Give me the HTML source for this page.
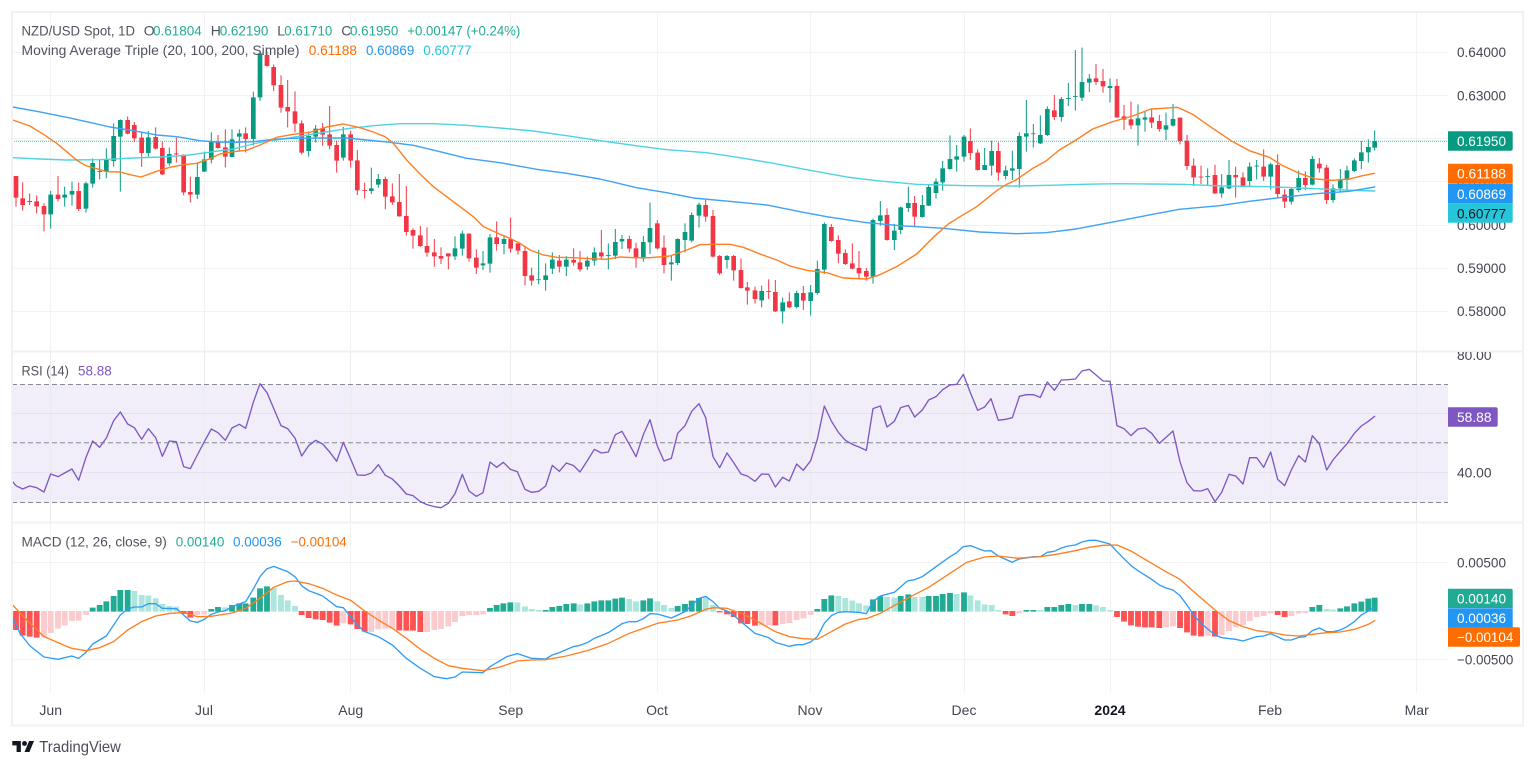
<!DOCTYPE html>
<html><head><meta charset="utf-8"><title>NZD/USD</title>
<style>
html,body{margin:0;padding:0;background:#fff;width:1536px;height:767px;overflow:hidden}
svg{display:block;filter:blur(.3px)}
text{font-family:"Liberation Sans",sans-serif;font-size:14px;fill:#434651}
.w{fill:#fff}
.u{fill:#22AB94}
.l{fill:#50535e}
</style></head><body>
<svg width="1536" height="767" viewBox="0 0 1536 767" xmlns="http://www.w3.org/2000/svg">
<defs><clipPath id="c80"><rect x="1448" y="352" width="70" height="30"/></clipPath></defs>
<rect width="1536" height="767" fill="#fff"/>
<!-- RSI band -->
<rect x="12" y="384.3" width="1436" height="118" fill="#F2EEF9"/>
<!-- grid -->
<g stroke="#F3F3F6" stroke-width="1" fill="none">
<path d="M12 52.5H1448M12 95.5H1448M12 138.5H1448M12 181.5H1448M12 225.5H1448M12 268.5H1448M12 311.5H1448"/>
<path d="M12 562.5H1448M12 659.5H1448"/>
<path d="M50.5 13V693M204.5 13V693M350.5 13V693M510.5 13V693M657.5 13V693M810.5 13V693M964.5 13V693M1110.5 13V693M1270.5 13V693M1416.5 13V693"/>
</g>
<path d="M12 413.5H1448M12 472.5H1448" stroke="#E6E2F0" fill="none"/>
<path d="M50.5 352V522M204.5 352V522M350.5 352V522M510.5 352V522M657.5 352V522M810.5 352V522M964.5 352V522M1110.5 352V522M1270.5 352V522M1416.5 352V522" stroke="#000" stroke-opacity=".03" fill="none"/>
<path d="M12 384.5H1448M12 442.8H1448M12 502.5H1448" stroke="#787B86" stroke-opacity=".9" stroke-dasharray="5 3" fill="none"/>
<!-- candles group 1 -->
<g transform="scale(.33333)" fill="none">
<path stroke="#F23645" stroke-width="3" d="M48 528V620M68 547V632M89 580V615M110 586V640M132 610V694M174 528V604M236 548V633M383 349V403M403 366V426M425 398V501M467 382V448M487 425V525M529 413V488M551 464V586M571 530V607M654 405V446M676 388V502M737 382V457M801 155V200M821 193V273M843 226V338M863 240V382M885 274V397M905 361V463M968 369V437M989 318V448M1010 422V518M1052 392V503M1072 450V585M1094 548V596M1156 530V627M1177 550V615M1198 522V650M1219 558V707M1239 685V746M1261 678V741M1281 682V770M1303 717V800M1323 742V792M1345 760V808M1407 700V785M1429 748V822M1490 664V752M1532 653V758M1554 730V764"/>
<path stroke="#F23645" stroke-width="14" d="M48 528V593M68 595V615M89 603V606M110 604V619M132 618V643M174 584V597M236 573V627M383 360V401M403 375V415M425 413V459M467 411V446M487 444V523M529 460V463M551 464V577M571 576V584M654 424V444M676 442V470M737 400V417M801 165V198M821 201V256M843 255V323M863 321V334M885 334V371M905 370V458M968 385V404M989 403V437M1010 435V482M1052 403V482M1072 481V571M1094 570V572.5M1156 537V590M1177 589V607M1198 606V649M1219 648V696M1239 690V707M1261 706V738M1281 738V758M1303 757V769M1323 768V776M1345 760V769M1407 701V775M1429 773V803M1490 712V732M1532 717V746M1554 730V752"/>
<path stroke="#089981" stroke-width="3" d="M152 573V686M194 560V620M216 545V617M258 545V638M278 475V563M299 478V538M319 445V535M341 370V500M361 358V575M445 393V470M508 443V497M592 490V597M613 455V516M634 397V490M696 388V472M718 388V455M760 275V437M780 155V303M926 395V470M947 375V428M1030 381V482M1114 503V582M1135 522V563M1365 709V780M1387 692V767M1449 753V810M1470 702V818M1512 705V763"/>
<path stroke="#089981" stroke-width="14" d="M152 584V643M194 584V593M216 573V584M258 550V626M278 489V551M299 513V515.5M319 479V515M341 408V483M361 360V410M445 412V459M508 462V490M592 531V584M613 478V515M634 424V479M696 418V471M718 400V410M760 292V417M780 160V292M926 408V453M947 386V410M1030 403V473M1114 565V573M1135 537V554M1365 745V769M1387 701V746M1449 790V796M1470 712V791M1512 717V732"/>
</g>
<!-- candles group 2 -->
<g transform="translate(500 0) scale(.33333)" fill="none">
<path stroke="#F23645" stroke-width="3" d="M75 740V856M95 803V857M178 765V817M221 745V797M240 753V815M304 690V778M388 707V757M408 728V803M472 660V748M492 706V820M617 600V665M639 630V772M659 765V825M701 765V842M723 775V866M742 846V914M765 860V911M806 838V897M826 840V936M868 877V925M910 858V930M994 672V725M1015 706V790M1036 748V795M1057 730V808M1077 753V835M1099 804V842M1161 625V722M1244 588V678M1411 385V480M1433 448V512M1495 427V542"/>
<path stroke="#F23645" stroke-width="14" d="M75 753V828M95 826V842M178 782V800M221 780V788M240 787V808M304 757V769M388 717V746M408 745V775M472 670V745M492 743V795M617 615V650M639 648V770M659 768V820M701 768V811M723 810V864M742 862V872M765 871V897M806 873V875.5M826 876V934M868 904V922M910 879V902M994 681V723M1015 720V761M1036 759V792M1057 790V806M1077 804V820M1099 813V830M1161 645V720M1244 609V650M1411 423V459M1433 458V510M1495 453V518"/>
<path stroke="#089981" stroke-width="3" d="M116 750V853M137 790V872M157 757V822M199 768V828M262 770V810M283 742V797M325 730V808M346 687V777M366 705V747M430 708V785M450 608V762M514 768V842M533 715V795M555 670V757M575 637V727M597 608V683M681 765V806M785 857V922M848 893V970M890 872V925M932 855V947M952 782V884M973 667V822M1119 656V851M1141 603V677M1183 672V750M1202 620V702M1225 560V636M1267 585V653M1286 552V618M1308 535V596M1328 483V572M1350 406V509M1370 435V515M1392 405V485M1454 444V510M1475 422V527M1517 497V538M1537 452V540"/>
<path stroke="#089981" stroke-width="14" d="M116 838V840.5M137 826V840M157 779V806M199 779V800M262 782V800M283 757V782M325 765V767.5M346 726V767M366 717V724M430 726V776M450 684V727M514 787V793M533 717V789M555 696V720M575 645V722M597 614V647M681 768V780M785 873V901M848 907V934M890 879V921M932 877V903M952 807V879M973 672V809M1119 660V830M1141 646V663M1183 692V720M1202 622V690M1225 609V624M1267 615V651M1286 561V617M1308 545V579M1328 505V547M1350 477V507M1370 469V479M1392 410V470M1454 495V510M1475 453V497M1517 511V528M1537 505V512"/>
</g>
<!-- candles group 3 -->
<g transform="translate(1016 0) scale(.33333)" fill="none">
<path stroke="#089981" stroke-width="3" d="M10 397V563M31 300V455M52 372V443M73 346V432M94 319V408M136 291V365M157 249V318M178 150V332M198 143V303M220 222V276M282 235V307M366 313V437M387 335V395M450 338V420M471 312V380M575 505V555M617 522V593M639 480V568M701 487V558M722 480V538M764 488V568M826 565V613M848 512V577M889 468V556M951 553V608M973 507V575M993 497V573M1015 475V516M1036 423V507M1057 418V488M1076 391V452"/>
<path stroke="#089981" stroke-width="14" d="M10 408V507M31 400V410M52 400V402.5M73 405V430M94 327V405M136 297V351M157 294V296.5M178 288V290.5M198 246V293M220 236V248M282 258V264M366 355V376M387 352V359M450 376V389M471 357V377M575 528V530.5M617 562V580M639 525V565M701 500V543M722 497V499.5M764 493V530M826 567V605M848 534V570M889 477V554M951 565V600M973 538V565M993 511V540M1015 481V513M1036 457V483M1057 441V457M1076 423V443"/>
<path stroke="#F23645" stroke-width="3" d="M115 285V360M240 192V255M261 207V278M303 237V354M324 315V390M345 305V387M407 327V384M430 345V395M492 352V433M513 405V510M533 475V558M555 497V552M597 494V582M659 500V593M681 517V560M743 448V543M785 463V596M806 567V624M868 514V570M910 474V518M932 495V612"/>
<path stroke="#F23645" stroke-width="14" d="M115 331V351M240 235V246M261 243V259M303 258V352M324 349V359M345 358V376M407 352V368M430 363V387M492 353V423M513 422V498M533 497V532M555 530V532.5M597 525V580M659 525V532M681 532V558M743 500V530M785 495V582M806 584V605M868 534V555M910 491V505M932 503V600"/>
</g>
<!-- price line -->
<path d="M12 141.2H1448" stroke="#10A78E" stroke-opacity=".8" stroke-dasharray="1 1" fill="none"/>
<!-- MAs -->
<g fill="none" stroke-width="4.2" stroke-linejoin="round" stroke-linecap="round">
<g stroke="#4FD3E3">
<polyline transform="scale(.33333)" points="38,473 120,477 200,480 300,479 400,474 480,471 560,466 640,455 700,447 780,427 860,415 960,399 1040,386 1120,377 1200,371 1300,371 1400,376 1500,384"/>
<polyline transform="translate(500 0) scale(.33333)" points="0,384 100,393 200,407 300,422 400,436 500,449 620,458 720,473 820,490 930,511 1040,531 1130,542 1250,553 1400,557 1548,558"/>
<polyline transform="translate(1016 0) scale(.33333)" points="0,558 100,556 200,553 300,551 400,552 500,553 620,558 760,560 900,566 980,570 1076,573"/>
</g>
<g stroke="#3FA2F5">
<polyline transform="scale(.33333)" points="38,321 120,336 200,352 260,365 330,381 400,392 470,405 530,410 600,422 650,426 700,427 760,425 820,418 880,415 960,414 1040,414 1100,420 1170,427 1240,436 1320,455 1400,475 1500,488"/>
<polyline transform="translate(500 0) scale(.33333)" points="0,488 110,508 200,520 300,537 410,563 500,578 580,594 700,605 800,615 900,635 980,650 1100,668 1200,677 1330,685 1440,696 1548,701"/>
<polyline transform="translate(1016 0) scale(.33333)" points="0,701 90,698 180,687 280,668 400,645 490,628 610,617 700,604 800,592 900,581 1000,574 1076,561"/>
</g>
<g stroke="#FF7F20">
<polyline transform="scale(.33333)" points="38,360 90,378 130,403 170,430 200,455 232,482 258,497 290,506 320,515 360,516 390,524 423,531 470,514 510,502 550,494 590,490 630,476 660,462 700,455 740,451 780,435 830,412 880,403 930,397 980,381 1030,372 1080,383 1120,396 1155,410 1180,430 1220,480 1260,522 1300,560 1340,590 1380,620 1420,650 1450,680 1490,698 1500,703"/>
<polyline transform="translate(500 0) scale(.33333)" points="0,703 30,715 60,730 90,750 130,765 170,772 220,773 270,776 320,778 360,771 400,773 450,773 510,768 560,750 600,734 640,733 690,733 730,742 780,762 830,780 870,798 920,811 980,818 1030,834 1100,837 1140,824 1190,800 1250,762 1300,712 1345,672 1380,650 1430,620 1490,572 1520,553 1548,540"/>
<polyline transform="translate(1016 0) scale(.33333)" points="0,540 50,505 90,483 130,450 180,420 230,387 290,365 350,348 405,327 440,325 485,322 530,343 590,385 650,425 700,452 760,472 800,497 850,520 900,537 950,541 1000,537 1040,527 1076,520"/>
</g>
</g>
<!-- RSI line -->
<g fill="none" stroke="#7E57C2" stroke-width="4" stroke-linejoin="round" stroke-linecap="round">
<polyline transform="translate(0 350) scale(.33333)" points="38,395 48,407 68,417 89,408 110,413 132,426 152,372 174,380 194,369 216,357 236,391 258,322 278,273 299,292 319,264 341,212 361,186 383,222 403,233 425,268 445,236 467,263 487,319 508,273 529,275 551,350 571,356 592,315 613,275 634,237 654,248 676,271 696,234 718,223 737,235 760,157 780,101 801,128 821,175 843,227 863,236 885,264 905,318 926,287 947,271 968,282 989,306 1010,334 1030,277 1052,327 1072,375 1094,376 1114,369 1135,344 1156,376 1177,387 1198,408 1219,432 1239,437 1261,455 1281,464 1303,470 1323,473 1345,460 1365,431 1387,373 1407,423 1429,439 1449,428 1470,336 1490,352"/>
<polyline transform="translate(500 350) scale(.33333)" points="-10,352 10,337 31,358 52,365 75,418 95,427 116,424 137,408 157,346 178,364 199,339 221,347 240,366 262,332 283,298 304,309 325,306 346,254 366,244 388,283 408,320 430,254 450,209 472,288 492,333 514,325 533,250 555,227 575,184 597,161 617,203 639,320 659,353 681,309 701,338 723,372 742,378 765,394 785,372 806,373 826,411 848,382 868,393 890,342 910,361 932,332 952,268 973,168 994,213 1015,247 1036,271 1057,283 1077,291 1099,301 1119,176 1141,168 1161,231 1183,214 1202,173 1225,166 1244,201 1267,180 1286,150 1308,140 1328,119 1350,105 1370,103 1390,73 1411,128 1433,181 1454,171 1473,146 1495,211 1517,208 1537,203 1558,140"/>
<polyline transform="translate(1016 350) scale(.33333)" points="10,139 31,134 52,134 73,142 94,96 115,121 136,90 157,89 178,87 198,63 220,58 240,75 261,93 282,94 303,227 324,236 345,257 366,237 387,234 407,250 430,280 450,262 471,243 492,335 513,398 533,422 555,423 575,416 597,455 617,427 639,373 659,378 681,402 701,323 722,323 743,352 764,306 785,388 806,407 826,360 848,317 868,336 889,257 910,281 932,360 951,330 973,304 993,281 1015,250 1036,228 1057,214 1076,199"/>
</g>
<!-- MACD histogram -->
<g transform="translate(0 350) scale(.33333)" fill="none" stroke-width="17.5">
<path stroke="#FF5252" d="M48 783V840M68 783V857M89 783V860M110 783V863M551 783V792M571 783V803M905 783V795M926 783V804M947 783V808M968 783V810M989 783V818M1010 783V827M1052 783V823M1072 783V837M1094 783V845M1198 783V841M1219 783V842M1239 783V842M1261 783V846"/>
<path stroke="#FCCBCD" d="M132 783V862M152 783V849M174 783V836M194 783V826M216 783V813M236 783V812M258 783V795M592 783V795M613 783V793M1030 783V820M1114 783V846M1135 783V838M1156 783V836M1177 783V836M1281 783V846M1303 783V840M1323 783V837M1345 783V829M1365 783V816M1387 783V798M1407 783V795M1429 783V795M1449 783V793"/>
<path stroke="#22AB94" d="M278 785V773M299 785V765M319 785V754M341 785V738M361 785V720M383 785V720M634 785V777M654 785V771M696 785V765M718 785V760M737 785V760M760 785V743M780 785V715M801 785V709M1470 785V774M1490 785V765"/>
<path stroke="#ACE5DC" d="M403 785V723M425 785V735M445 785V737M467 785V745M487 785V762M508 785V768M529 785V770M676 785V772M821 785V714M843 785V735M863 785V751M885 785V768"/>
</g>
<g transform="translate(500 350) scale(.33333)" fill="none" stroke-width="17.5">
<path stroke="#22AB94" d="M10 785V760M31 785V757M137 785V780M157 785V771M178 785V768M199 785V762M221 785V760M262 785V760M283 785V754M304 785V751M325 785V751M346 785V746M366 785V743M430 785V751M450 785V745M533 785V768M555 785V762M575 785V752M597 785V744M952 785V777M973 785V747M994 785V736M1119 785V748M1141 785V739M1202 785V738M1225 785V733M1286 785V738M1308 785V738M1328 785V732M1350 785V729M1392 785V727"/>
<path stroke="#ACE5DC" d="M52 785V757M75 785V769M95 785V777M116 785V780M240 785V763M388 785V747M408 785V754M472 785V754M492 785V765M514 785V774M617 785V742M639 785V765M1015 785V738M1036 785V744M1057 785V752M1077 785V760M1099 785V766M1161 785V741M1183 785V743M1244 785V741M1267 785V741M1370 785V732M1411 785V736M1433 785V751M1454 785V763M1475 785V765M1495 785V780"/>
<path stroke="#FF5252" d="M659 783V787M681 783V793M701 783V801M723 783V820M742 783V822M765 783V827M826 783V826M1517 783V793M1537 783V798"/>
<path stroke="#FCCBCD" d="M785 783V826M806 783V826M848 783V822M868 783V819M890 783V810M910 783V805M932 783V795M1558 783V790"/>
</g>
<g transform="translate(1016 350) scale(.33333)" fill="none" stroke-width="17.5">
<path stroke="#22AB94" d="M31 785V780M52 785V780M94 785V771M115 785V771M136 785V765M157 785V762M198 785V762M220 785V762M889 785V771M910 785V765M973 785V775M993 785V769M1015 785V760M1036 785V755M1057 785V746M1076 785V743"/>
<path stroke="#ACE5DC" d="M73 785V780M178 785V765M240 785V766M261 785V771M282 785V780M932 785V777M951 785V779"/>
<path stroke="#FF5252" d="M303 783V801M324 783V815M345 783V826M366 783V830M387 783V832M407 783V832M430 783V834M492 783V834M513 783V847M533 783V857M555 783V859M597 783V860M785 783V795M806 783V801"/>
<path stroke="#FCCBCD" d="M450 783V832M471 783V829M575 783V857M617 783V855M639 783V843M659 783V832M681 783V825M701 783V813M722 783V801M743 783V798M764 783V790M826 783V798M848 783V791M868 783V789"/>
</g>
<!-- MACD lines -->
<g fill="none" stroke-width="4" stroke-linejoin="round" stroke-linecap="round">
<g stroke="#2E9DF5">
<polyline transform="translate(0 350) scale(.33333)" points="38,805 60,850 90,888 132,921 174,928 215,918 236,925 258,907 278,882 319,858 341,825 361,795 383,777 403,771 425,771 445,761 467,761 487,775 529,776 551,795 571,813 592,817 613,808 634,793 654,786 676,782 696,770 737,755 760,717 780,680 800,657 821,649 863,665 885,680 905,707 926,722 968,738 1010,770 1030,773 1052,800 1072,825 1094,845 1135,860 1177,885 1219,925 1261,955 1303,980 1340,986 1365,981 1387,966 1449,968 1470,950 1500,932"/>
<polyline transform="translate(500 350) scale(.33333)" points="0,932 20,920 52,911 95,925 137,927 157,915 178,908 220,890 240,886 262,878 283,865 325,848 366,821 388,815 410,815 430,806 450,791 472,792 514,804 555,785 597,745 617,739 639,755 659,775 681,783 701,796 723,815 765,850 806,863 826,877 868,889 890,884 910,884 932,876 952,860 973,820 994,797 1015,787 1036,785 1077,787 1099,791 1119,755 1141,738 1183,727 1222,693 1244,689 1267,680 1308,650 1350,620 1370,608 1390,590 1411,587 1454,603 1473,602 1495,618 1537,637 1548,631"/>
<polyline transform="translate(1016 350) scale(.33333)" points="0,631 10,627 52,620 73,620 94,607 115,604 136,594 157,588 178,585 198,576 220,571 240,571 282,582 303,605 345,647 366,662 407,688 430,705 450,714 471,720 492,737 513,765 533,795 555,820 597,855 617,863 659,868 681,873 722,860 743,858 764,851 806,870 826,870 848,862 868,860 889,842 910,834 932,845 951,845 973,840 993,830 1015,815 1036,795 1076,772"/>
</g>
<g stroke="#FF7F20">
<polyline transform="translate(0 350) scale(.33333)" points="38,765 80,810 132,860 174,878 215,895 258,902 299,893 341,875 383,840 425,815 467,798 510,790 551,788 592,800 634,799 696,789 737,775 780,745 821,712 863,695 885,693 926,701 968,715 1010,735 1052,751 1094,783 1135,810 1177,835 1219,865 1261,898 1303,925 1345,947 1387,955 1449,962 1500,951"/>
<polyline transform="translate(500 350) scale(.33333)" points="0,951 52,933 95,930 137,929 199,918 262,902 325,880 388,850 430,835 472,820 533,810 575,797 617,778 640,773 681,775 723,790 765,810 826,845 868,860 910,866 952,868 994,845 1036,822 1077,808 1099,806 1141,790 1222,745 1286,712 1350,670 1400,637 1454,621 1495,618 1548,624"/>
<polyline transform="translate(1016 350) scale(.33333)" points="0,625 73,620 115,614 178,602 220,592 261,586 303,585 345,603 407,640 450,665 492,688 533,725 597,780 639,812 681,830 722,842 764,847 806,855 848,858 889,853 932,848 973,846 1015,838 1057,823 1076,812"/>
</g>
</g>
<!-- frame & separators -->
<rect x="12" y="12" width="1511" height="713.5" fill="none" stroke="#F0F0F6" stroke-width="2"/>
<path d="M12 351.5H1523M12 522.5H1523" stroke="#F0F0F6" stroke-width="2" fill="none"/>
<!-- legends -->
<g>
<text class="l" x="21.5" y="35.7" textLength="113.5" lengthAdjust="spacingAndGlyphs">NZD/USD Spot, 1D</text>
<text class="l" x="143.7" y="35.7" textLength="8">O</text>
<text class="u" x="153" y="35.7" textLength="48.7" lengthAdjust="spacingAndGlyphs">0.61804</text>
<text class="l" x="210.7" y="35.7" textLength="8">H</text>
<text class="u" x="219.7" y="35.7" textLength="48.7" lengthAdjust="spacingAndGlyphs">0.62190</text>
<text class="l" x="277.3" y="35.7" textLength="6">L</text>
<text class="u" x="284.3" y="35.7" textLength="48" lengthAdjust="spacingAndGlyphs">0.61710</text>
<text class="l" x="341.3" y="35.7" textLength="7.5">C</text>
<text class="u" x="350" y="35.7" textLength="48.3" lengthAdjust="spacingAndGlyphs">0.61950</text>
<text class="u" x="407.3" y="35.7" textLength="113" lengthAdjust="spacingAndGlyphs">+0.00147 (+0.24%)</text>
<text class="l" x="21.5" y="55" textLength="278" lengthAdjust="spacingAndGlyphs">Moving Average Triple (20, 100, 200, Simple)</text>
<text x="308.7" y="55" textLength="48.3" lengthAdjust="spacingAndGlyphs" style="fill:#FF6D00">0.61188</text>
<text x="366" y="55" textLength="48.3" lengthAdjust="spacingAndGlyphs" style="fill:#2196F3">0.60869</text>
<text x="423.3" y="55" textLength="48.3" lengthAdjust="spacingAndGlyphs" style="fill:#26C6DA">0.60777</text>
<text class="l" x="21.5" y="375.5" textLength="47.3" lengthAdjust="spacingAndGlyphs">RSI (14)</text>
<text x="78" y="375.5" textLength="33.7" lengthAdjust="spacingAndGlyphs" style="fill:#7E57C2">58.88</text>
<text class="l" x="21.5" y="546.5" textLength="145.3" lengthAdjust="spacingAndGlyphs">MACD (12, 26, close, 9)</text>
<text class="u" x="175.7" y="546.5" textLength="48.7" lengthAdjust="spacingAndGlyphs">0.00140</text>
<text x="233" y="546.5" textLength="48.7" lengthAdjust="spacingAndGlyphs" style="fill:#2196F3">0.00036</text>
<text x="290.7" y="546.5" textLength="56" lengthAdjust="spacingAndGlyphs" style="fill:#FF6D00">−0.00104</text>
</g>
<!-- price axis -->
<g>
<text x="1457" y="57" textLength="49" lengthAdjust="spacingAndGlyphs">0.64000</text>
<text x="1457" y="100.5" textLength="49" lengthAdjust="spacingAndGlyphs">0.63000</text>
<text x="1457" y="186" textLength="49" lengthAdjust="spacingAndGlyphs">0.61000</text>
<text x="1457" y="230" textLength="49" lengthAdjust="spacingAndGlyphs">0.60000</text>
<text x="1457" y="273" textLength="49" lengthAdjust="spacingAndGlyphs">0.59000</text>
<text x="1457" y="316" textLength="49" lengthAdjust="spacingAndGlyphs">0.58000</text>
<text x="1457" y="360" textLength="34.5" lengthAdjust="spacingAndGlyphs" clip-path="url(#c80)">80.00</text>
<text x="1457" y="477.7" textLength="34.5" lengthAdjust="spacingAndGlyphs">40.00</text>
<text x="1457" y="567.7" textLength="49" lengthAdjust="spacingAndGlyphs">0.00500</text>
<text x="1457" y="664.3" textLength="56.3" lengthAdjust="spacingAndGlyphs">−0.00500</text>
</g>
<!-- price tags -->
<g>
<path d="M1448 131.3H1510.7a2 2 0 0 1 2 2V148.7a2 2 0 0 1-2 2H1448Z" fill="#089981"/>
<text class="w" x="1457" y="146" textLength="49" lengthAdjust="spacingAndGlyphs">0.61950</text>
<path d="M1448 163.7H1510.7a2 2 0 0 1 2 2V183.7H1448Z" fill="#FF6D00"/>
<text class="w" x="1457" y="178.5" textLength="49" lengthAdjust="spacingAndGlyphs">0.61188</text>
<path d="M1448 184H1512.7V203.7H1448Z" fill="#2196F3"/>
<text class="w" x="1457" y="199" textLength="49" lengthAdjust="spacingAndGlyphs">0.60869</text>
<path d="M1448 204H1512.7V220.7a2 2 0 0 1-2 2H1448Z" fill="#26C6DA"/>
<text x="1457" y="218.7" textLength="49" lengthAdjust="spacingAndGlyphs" style="fill:#131722">0.60777</text>
<path d="M1448 407.3H1495.7a2 2 0 0 1 2 2V424.7a2 2 0 0 1-2 2H1448Z" fill="#7E57C2"/>
<text class="w" x="1457" y="422" textLength="34.5" lengthAdjust="spacingAndGlyphs">58.88</text>
<path d="M1448 588.7H1510.7a2 2 0 0 1 2 2V608H1448Z" fill="#22AB94"/>
<text class="w" x="1457" y="603.3" textLength="49" lengthAdjust="spacingAndGlyphs">0.00140</text>
<path d="M1448 608.3H1512.7V628H1448Z" fill="#2196F3"/>
<text class="w" x="1457" y="623" textLength="49" lengthAdjust="spacingAndGlyphs">0.00036</text>
<path d="M1448 627.3H1518a2 2 0 0 1 2 2V644.7a2 2 0 0 1-2 2H1448Z" fill="#FF6D00"/>
<text class="w" x="1457" y="642" textLength="56.3" lengthAdjust="spacingAndGlyphs">−0.00104</text>
</g>
<!-- time axis -->
<g text-anchor="middle">
<text x="50.7" y="715">Jun</text>
<text x="204" y="715">Jul</text>
<text x="350.7" y="715">Aug</text>
<text x="510.7" y="715">Sep</text>
<text x="657" y="715">Oct</text>
<text x="810" y="715">Nov</text>
<text x="964" y="715">Dec</text>
<text x="1110" y="715" style="fill:#131722;font-weight:bold">2024</text>
<text x="1270" y="715">Feb</text>
<text x="1416.7" y="715">Mar</text>
</g>
<!-- logo -->
<g transform="translate(12.3 738.6) scale(.611)" fill="#131722">
<path d="M14 22H7V11H0V4h14v18zM28 22h-8l7.5-18h8L28 22z"/><circle cx="20" cy="8" r="4"/>
</g>
<text x="39.3" y="752" textLength="81.5" lengthAdjust="spacingAndGlyphs" style="font-size:16px;fill:#4A4C57">TradingView</text>
</svg>
</body></html>
